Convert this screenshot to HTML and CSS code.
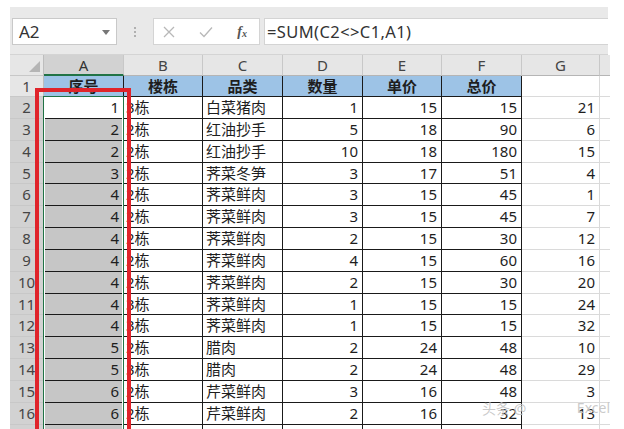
FILE: index.html
```html
<!DOCTYPE html>
<html lang="zh">
<head>
<meta charset="utf-8">
<link rel="stylesheet" href="styles.css">
</head>
<body>
<div class="app">
  <div class="fbar">
    <div class="namebox"><span>A2</span><svg class="dd" width="8" height="5" viewBox="0 0 8 5"><path d="M0 0H8L4 5Z" fill="#777"/></svg></div>
    <div class="dots"><i></i><i></i><i></i></div>
    <div class="fxbox">
      <svg class="ic" width="12" height="12" viewBox="0 0 12 12"><path d="M1 1L11 11M11 1L1 11" stroke="#b8b8b8" stroke-width="1.3" fill="none"/></svg>
      <svg class="ic" width="14" height="12" viewBox="0 0 14 12"><path d="M1 6.5L5 10.5L13 1.5" stroke="#b8b8b8" stroke-width="1.3" fill="none"/></svg>
      <span class="fx">f<sub>x</sub></span>
    </div>
    <div class="formula">=SUM(C2&lt;&gt;C1,A1)</div>
  </div>
  <div class="sheet">
    <div class="row hdr">
      <div class="rh corner"><svg width="11" height="11" viewBox="0 0 11 11"><path d="M11 0V11H0Z" fill="#b5b5b5"/></svg></div>
      <div class="ch a sel">A</div><div class="ch b">B</div><div class="ch c3">C</div><div class="ch d">D</div><div class="ch e">E</div><div class="ch f">F</div><div class="ch g">G</div><div class="ch h"></div>
    </div>
    <div class="row r1">
      <div class="rh">1</div>
      <div class="c a bl">序号</div><div class="c b bl">楼栋</div><div class="c c3 bl">品类</div><div class="c d bl">数量</div><div class="c e bl">单价</div><div class="c f bl">总价</div><div class="c g gl"></div><div class="c h gl"></div>
    </div>
    <div class="row"><div class="rh s">2</div><div class="c a n act">1</div><div class="c b t">3栋</div><div class="c c3 t">白菜猪肉</div><div class="c d n">1</div><div class="c e n">15</div><div class="c f n">15</div><div class="c g n gl">21</div><div class="c h gl"></div></div>
    <div class="row"><div class="rh s">3</div><div class="c a n sa">2</div><div class="c b t">2栋</div><div class="c c3 t">红油抄手</div><div class="c d n">5</div><div class="c e n">18</div><div class="c f n">90</div><div class="c g n gl">6</div><div class="c h gl"></div></div>
    <div class="row"><div class="rh s">4</div><div class="c a n sa">2</div><div class="c b t">2栋</div><div class="c c3 t">红油抄手</div><div class="c d n">10</div><div class="c e n">18</div><div class="c f n">180</div><div class="c g n gl">15</div><div class="c h gl"></div></div>
    <div class="row"><div class="rh s">5</div><div class="c a n sa">3</div><div class="c b t">2栋</div><div class="c c3 t">荠菜冬笋</div><div class="c d n">3</div><div class="c e n">17</div><div class="c f n">51</div><div class="c g n gl">4</div><div class="c h gl"></div></div>
    <div class="row"><div class="rh s">6</div><div class="c a n sa">4</div><div class="c b t">2栋</div><div class="c c3 t">荠菜鲜肉</div><div class="c d n">3</div><div class="c e n">15</div><div class="c f n">45</div><div class="c g n gl">1</div><div class="c h gl"></div></div>
    <div class="row"><div class="rh s">7</div><div class="c a n sa">4</div><div class="c b t">2栋</div><div class="c c3 t">荠菜鲜肉</div><div class="c d n">3</div><div class="c e n">15</div><div class="c f n">45</div><div class="c g n gl">7</div><div class="c h gl"></div></div>
    <div class="row"><div class="rh s">8</div><div class="c a n sa">4</div><div class="c b t">2栋</div><div class="c c3 t">荠菜鲜肉</div><div class="c d n">2</div><div class="c e n">15</div><div class="c f n">30</div><div class="c g n gl">12</div><div class="c h gl"></div></div>
    <div class="row"><div class="rh s">9</div><div class="c a n sa">4</div><div class="c b t">2栋</div><div class="c c3 t">荠菜鲜肉</div><div class="c d n">4</div><div class="c e n">15</div><div class="c f n">60</div><div class="c g n gl">16</div><div class="c h gl"></div></div>
    <div class="row"><div class="rh s">10</div><div class="c a n sa">4</div><div class="c b t">2栋</div><div class="c c3 t">荠菜鲜肉</div><div class="c d n">2</div><div class="c e n">15</div><div class="c f n">30</div><div class="c g n gl">20</div><div class="c h gl"></div></div>
    <div class="row"><div class="rh s">11</div><div class="c a n sa">4</div><div class="c b t">3栋</div><div class="c c3 t">荠菜鲜肉</div><div class="c d n">1</div><div class="c e n">15</div><div class="c f n">15</div><div class="c g n gl">24</div><div class="c h gl"></div></div>
    <div class="row"><div class="rh s">12</div><div class="c a n sa">4</div><div class="c b t">3栋</div><div class="c c3 t">荠菜鲜肉</div><div class="c d n">1</div><div class="c e n">15</div><div class="c f n">15</div><div class="c g n gl">32</div><div class="c h gl"></div></div>
    <div class="row"><div class="rh s">13</div><div class="c a n sa">5</div><div class="c b t">2栋</div><div class="c c3 t">腊肉</div><div class="c d n">2</div><div class="c e n">24</div><div class="c f n">48</div><div class="c g n gl">10</div><div class="c h gl"></div></div>
    <div class="row"><div class="rh s">14</div><div class="c a n sa">5</div><div class="c b t">3栋</div><div class="c c3 t">腊肉</div><div class="c d n">2</div><div class="c e n">24</div><div class="c f n">48</div><div class="c g n gl">29</div><div class="c h gl"></div></div>
    <div class="row"><div class="rh s">15</div><div class="c a n sa">6</div><div class="c b t">2栋</div><div class="c c3 t">芹菜鲜肉</div><div class="c d n">3</div><div class="c e n">16</div><div class="c f n">48</div><div class="c g n gl">3</div><div class="c h gl"></div></div>
    <div class="row"><div class="rh s">16</div><div class="c a n sa">6</div><div class="c b t">2栋</div><div class="c c3 t">芹菜鲜肉</div><div class="c d n">2</div><div class="c e n">16</div><div class="c f n">32</div><div class="c g n gl">13</div><div class="c h gl"></div></div>
    <div class="row"><div class="rh s"></div><div class="c a n sa"></div><div class="c b t"></div><div class="c c3 t"></div><div class="c d n"></div><div class="c e n"></div><div class="c f n"></div><div class="c g n gl"></div><div class="c h gl"></div></div>
    <div class="selbox"></div>
    <div class="redbox"></div>
    <div class="wm"><span>头条 @</span><span class="wm2">Excel</span></div>
  </div>
</div>
</body>
</html>
```
FILE: styles.css
```css
html, body {
  margin: 0;
  padding: 0;
  background: #fff;
  overflow: hidden;
  height: 429px;
}
.app {
  padding: 7px 0 0 10px;
  width: 598px;
  font-family: "Noto Sans", "Noto Sans CJK SC", sans-serif;
  color: #222;
}
.fbar {
  height: 48px;
  background: #e9e9e9;
  display: flex;
  align-items: flex-start;
  padding-top: 11px;
  box-sizing: border-box;
  border-bottom: 1px solid #d4d4d4;
}
.namebox {
  margin-left: 2px;
  width: 105px;
  height: 27px;
  box-sizing: border-box;
  background: #fff;
  border: 1px solid #c9c9c9;
  display: flex;
  align-items: center;
  justify-content: space-between;
  padding: 0 6px 0 6px;
  font-size: 17px;
  color: #333;
}
.dd { margin-top: 1px; }
.dots {
  width: 36px;
  height: 27px;
  display: flex;
  flex-direction: column;
  align-items: center;
  justify-content: center;
  gap: 2px;
}
.dots i {
  width: 2px;
  height: 2px;
  background: #b0b0b0;
  display: block;
}
.fxbox {
  width: 107px;
  height: 27px;
  box-sizing: border-box;
  background: #fff;
  border: 1px solid #d4d4d4;
  display: flex;
  align-items: center;
  padding: 0 12px 0 9px;
  justify-content: space-between;
}
.fx {
  font-family: "Liberation Serif", serif;
  font-style: italic;
  font-weight: bold;
  font-size: 14px;
  color: #555;
  line-height: 1;
}
.fx sub { font-size: 10px; vertical-align: -1px; }
.formula {
  margin-left: 4px;
  flex: 1;
  height: 27px;
  box-sizing: border-box;
  background: #fff;
  border: 1px solid #d4d4d4;
  border-right: none;
  font-size: 16.5px;
  line-height: 25px;
  padding-left: 2px;
  letter-spacing: 0.4px;
  color: #333;
}
.sheet {
  position: relative;
}
.row {
  display: flex;
  height: 21.85px;
}
.row.hdr { height: 21px; }
.row.r1 { height: 21px; }
.rh {
  width: 34px;
  flex: none;
  box-sizing: border-box;
  background: #e6e6e6;
  border-right: 1px solid #bdbdbd;
  border-bottom: 1px solid #c8c8c8;
  text-align: center;
  font-size: 15px;
  color: #484848;
  line-height: 21px;
}
.rh.s { background: #d2d2d2; color: #454545; }
.corner {
  display: flex;
  align-items: flex-end;
  justify-content: flex-end;
  padding: 0 3px 3px 0;
}
.ch {
  flex: none;
  box-sizing: border-box;
  background: #e6e6e6;
  border-right: 1px solid #c8c8c8;
  border-bottom: 1px solid #b5b5b5;
  text-align: center;
  font-size: 15px;
  color: #444;
  line-height: 20px;
}
.ch.sel {
  background: #d2d2d2;
  border-bottom: 2px solid #217346;
  color: #333;
}
.ch.h { border-right: none; }
.a { width: 80px; }
.b { width: 79px; }
.c3 { width: 80px; }
.d { width: 80px; }
.e { width: 79px; }
.f { width: 80px; }
.g { width: 78px; }
.h { width: 10px; }
.c {
  flex: none;
  box-sizing: border-box;
  border-right: 1px solid #1a1a1a;
  border-bottom: 1px solid #1a1a1a;
  font-size: 15px;
  line-height: 21px;
  white-space: nowrap;
  overflow: hidden;
  color: #1e1e1e;
}
.c.bl {
  background: #9dc3e6;
  font-weight: bold;
  text-align: center;
  color: #1e1e1e;
}
.c.n { text-align: right; padding-right: 4px; }
.c.t { text-align: left; padding-left: 3px; }
.c.b.t { padding-left: 2px; }
.c.sa { background: #c6c6c6; }
.c.act { background: #fff; }
.c.gl {
  border-right: 1px solid #dadada;
  border-bottom: 1px solid #dadada;
}
.c.h.gl { border-right: none; }
.selbox {
  position: absolute;
  left: 33px;
  top: 41px;
  width: 81px;
  height: 400px;
  box-sizing: border-box;
  border: 1px solid #217346;
  box-shadow: inset 0 0 0 1px #fff;
  pointer-events: none;
}
.redbox {
  position: absolute;
  left: 25px;
  top: 33px;
  width: 96px;
  height: 400px;
  box-sizing: border-box;
  border: 4px solid #e0242b;
  pointer-events: none;
}
.wm {
  position: absolute;
  left: 472px;
  top: 343px;
  width: 128px;
  display: flex;
  justify-content: space-between;
  font-size: 14px;
  color: rgba(150, 150, 150, 0.5);
  text-shadow: 0 0 1px rgba(255,255,255,0.9);
  pointer-events: none;
}
```
